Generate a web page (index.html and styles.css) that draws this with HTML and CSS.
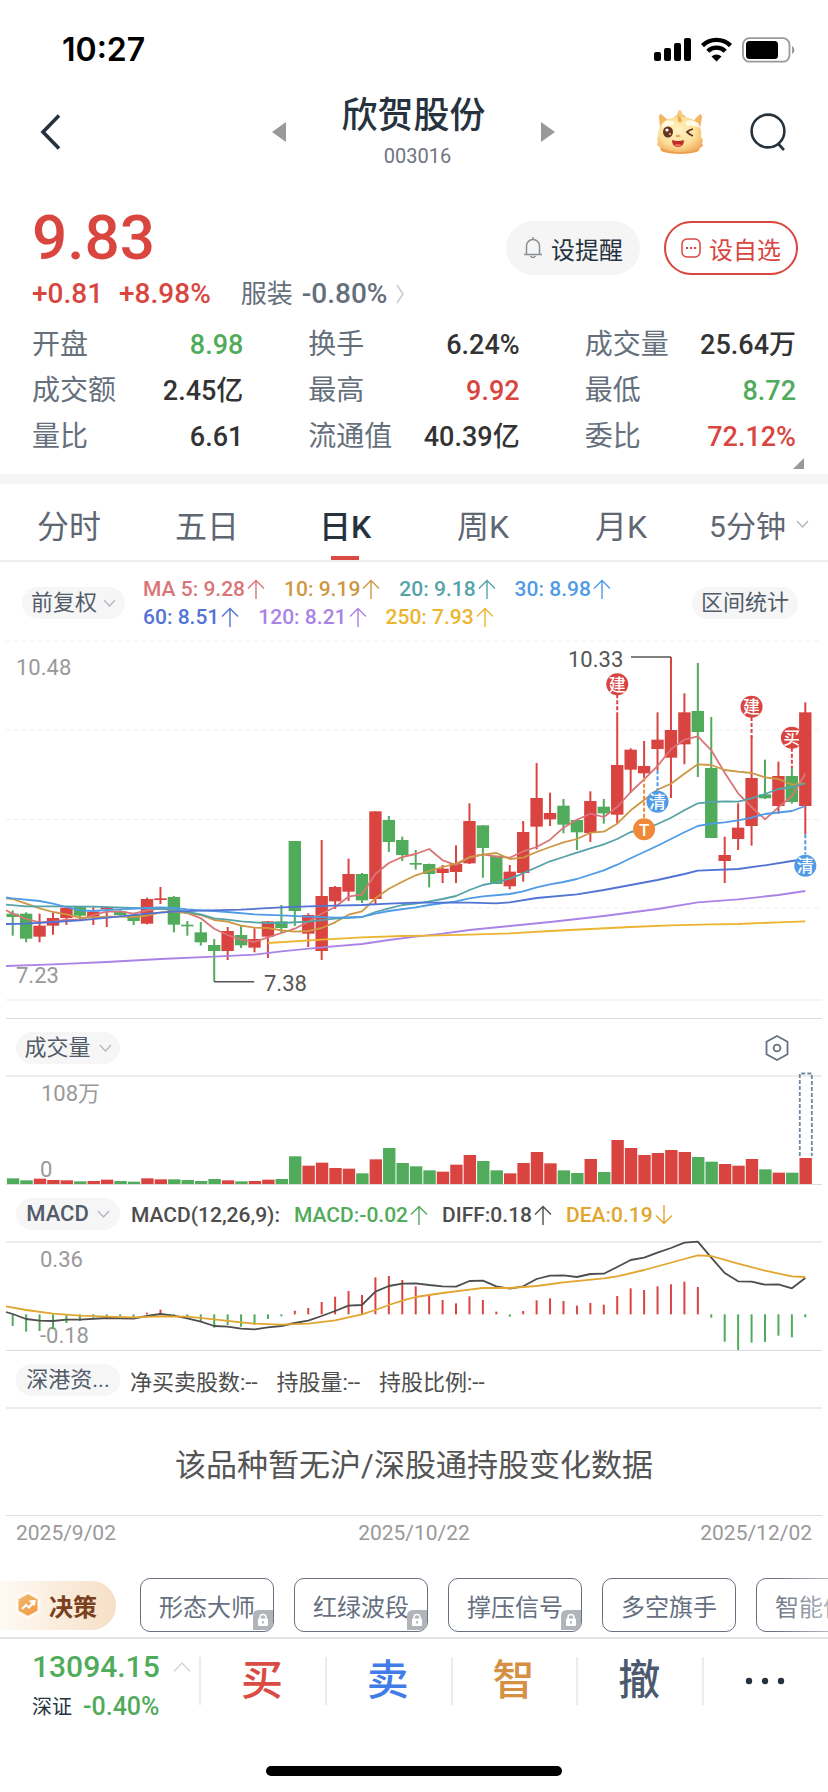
FILE: index.html
```html
<!DOCTYPE html>
<html lang="zh-CN">
<head>
<meta charset="utf-8">
<meta name="viewport" content="width=device-width, initial-scale=1">
<title>欣贺股份 003016</title>
<link rel="stylesheet" href="styles.css">
</head>
<body>
<div class="app">
  <div class="status">
    <span class="clock">10:27</span>
    <svg class="status-icons" width="142" height="26" viewBox="0 0 142 26" aria-hidden="true">
      <rect x="0" y="15" width="7" height="9" rx="2"/>
      <rect x="10" y="11" width="7" height="13" rx="2"/>
      <rect x="20" y="6" width="7" height="18" rx="2"/>
      <rect x="30" y="1" width="7" height="23" rx="2"/>
      <g fill="none" stroke="#000" stroke-width="4.4">
        <path d="M48.5 8.6a20 20 0 0 1 28 0"/>
        <path d="M53.8 14.2a12.4 12.4 0 0 1 17.4 0"/>
      </g>
      <path d="M62.5 24.4l-5-5a7.2 7.2 0 0 1 10 0z"/>
      <rect x="89" y="1.2" width="46.500" height="23.500" rx="6.500" fill="none" stroke="#999" stroke-width="1.800"/>
      <rect x="92" y="4" width="32" height="18" rx="3.500"/>
      <path d="M138 9a4.500 4.500 0 0 1 0 8z" fill="#999"/>
    </svg>
  </div>

  <header class="header">
    <button class="icon-btn back" aria-label="返回">
      <svg width="24" height="40" viewBox="0 0 24 40"><path d="M20 3.500 4 20l16 16.500" fill="none" stroke="#26333f" stroke-width="3.600"/></svg>
    </button>
    <div class="title-group">
      <button class="icon-btn" aria-label="上一只"><svg width="14" height="20" viewBox="0 0 14 20"><path d="M14 0v20L0 10z" fill="#999"/></svg></button>
      <div class="title-block">
        <h1 class="title">欣贺股份</h1>
        <div class="code">003016</div>
      </div>
      <button class="icon-btn" aria-label="下一只"><svg width="14" height="20" viewBox="0 0 14 20"><path d="M0 0v20l14-10z" fill="#999"/></svg></button>
    </div>
    <div class="header-actions">
      <button class="icon-btn" aria-label="助手">
        <svg width="50" height="46" viewBox="0 0 50 46">
          <defs><radialGradient id="face" cx=".45" cy=".4" r=".65"><stop offset="0" stop-color="#fff3c4"/><stop offset=".6" stop-color="#fce09a"/><stop offset="1" stop-color="#f2a95a"/></radialGradient></defs>
          <path d="M5 19 4 9q0-4 2-4l8 7zM45 19l2-10q0-4-2-4l-8 8z" fill="#f3b566"/>
          <path d="M18 10q1-3 4-4 1-5 3-5 2 1 2 4 5 2 5 6z" fill="#f6c877"/>
          <path d="M5 18Q9 8 25 8t20 10q2 5 1 10l2 3-1 3 1 3-3 2-2 3-5 0q-6 2-13 2-9 0-14-2l-5 0-1-4-3-2 1-3-1-3 1-2Q3 22 5 18z" fill="url(#face)"/>
          <path d="M5 39q20 8 40 1l-3 3q-17 4-34 0z" fill="#ef9d4d"/>
          <path d="M24 7q3 2 3 5l-2 2-2-2q-1-3 1-5z" fill="#e9aa50"/>
          <path d="M7 16q3-6 11-4 3 2 1 4-7 0-12 3zM31 12q7-2 12 2l2 5q-6-3-12-2-4-2-2-5z" fill="#fffbe5"/>
          <ellipse cx="13" cy="23" rx="5" ry="5.600" fill="#643322"/><circle cx="12" cy="21" r="1.600" fill="#fff"/><circle cx="15" cy="25" r="1.200" fill="#d89a68"/>
          <path d="M38 20q-4 1-6 3 3 3 6 4" fill="none" stroke="#643322" stroke-width="1.800"/>
          <ellipse cx="23" cy="27" rx="2.500" ry="1.300" fill="#f2a760"/>
          <path d="M17 31q6 2 12 0 0 7-6 7t-6-7z" fill="#bf2b2b"/><path d="M19 36q4-2 8 0-4 3-8 0z" fill="#ef6b5c"/>
        </svg>
      </button>
      <button class="icon-btn" aria-label="搜索">
        <svg width="38" height="40" viewBox="0 0 38 40"><g fill="none" stroke="#26333f" stroke-width="2.600"><circle cx="18" cy="19" r="16.400"/><path d="m27.500 31 6.500 7"/></g></svg>
      </button>
    </div>
  </header>

  <section class="quote">
    <div class="quote-top">
      <div class="quote-main">
        <div class="price">9.83</div>
        <div class="change">
          <span class="up">+0.81</span><span class="up">+8.98%</span>
          <a class="sector" href="#sector"><span class="sector-name">服装</span><span>-0.80%</span><svg width="9" height="20" viewBox="0 0 9 20"><path d="M1 1l6 9-6 9" fill="none" stroke="#c8ccd0" stroke-width="1.500"/></svg></a>
        </div>
      </div>
      <div class="quote-buttons">
        <button class="pill-btn">
          <svg width="20" height="22" viewBox="0 0 20 22"><g fill="none" stroke="#8a8f96" stroke-width="1.500"><path d="M1 17.500h18M3.500 17V9a6.500 6.500 0 0 1 13 0v8M7.500 19q2.500 3 5 0M10 0v2"/></g></svg>
          <span>设提醒</span>
        </button>
        <button class="pill-btn pill-red">
          <svg width="20" height="20" viewBox="0 0 20 20"><rect x="1" y="1" width="18" height="18" rx="5" fill="none" stroke="#d9463f" stroke-width="1.500"/><path d="M5 10h2.200M9 10h2.200M13 10h2.200" stroke="#d9463f" stroke-width="2"/></svg>
          <span>设自选</span>
        </button>
      </div>
    </div>
    <dl class="stats">
      <div class="stat"><dt>开盘</dt><dd class="down">8.98</dd></div>
      <div class="stat"><dt>换手</dt><dd>6.24%</dd></div>
      <div class="stat"><dt>成交量</dt><dd>25.64万</dd></div>
      <div class="stat"><dt>成交额</dt><dd>2.45亿</dd></div>
      <div class="stat"><dt>最高</dt><dd class="up">9.92</dd></div>
      <div class="stat"><dt>最低</dt><dd class="down">8.72</dd></div>
      <div class="stat"><dt>量比</dt><dd>6.61</dd></div>
      <div class="stat"><dt>流通值</dt><dd>40.39亿</dd></div>
      <div class="stat"><dt>委比</dt><dd class="up">72.12%</dd></div>
    </dl>
    <svg class="corner" width="11" height="11" viewBox="0 0 11 11" aria-hidden="true"><path d="M11 0v11H0z" fill="#999"/></svg>
  </section>

  <nav class="tabs">
    <button class="tab">分时</button>
    <button class="tab">五日</button>
    <button class="tab active">日K</button>
    <button class="tab">周K</button>
    <button class="tab">月K</button>
    <button class="tab tab-more">5分钟<svg width="13" height="8" viewBox="0 0 13 8"><path d="M1 1l5.500 6L12 1" fill="none" stroke="#b4bac0" stroke-width="1.500"/></svg></button>
  </nav>

  <svg class="defs" width="0" height="0" aria-hidden="true">
    <symbol id="up" viewBox="0 0 18 20"><path d="M9 20V1.500M1 9.500l8-8 8 8" fill="none" stroke="currentColor" stroke-width="1.400"/></symbol>
    <symbol id="down" viewBox="0 0 18 20"><path d="M9 0v18.500M1 10.500l8 8 8-8" fill="none" stroke="currentColor" stroke-width="1.400"/></symbol>
    <symbol id="chev" viewBox="0 0 13 8"><path d="M1 1l5.500 6L12 1" fill="none" stroke="#b4bcc6" stroke-width="1.500"/></symbol>
    <symbol id="lock" viewBox="0 0 20 20"><path d="M6 0h14v13q0 7-7 7H0V6q0-6 6-6z" fill="#b1b4b8"/><path d="M7 9V7.500a3 3 0 0 1 6 0V9" fill="none" stroke="#fff" stroke-width="1.500"/><rect x="5" y="8.500" width="10" height="7.500" rx="1" fill="#fff"/><path d="M10 11v2.500" stroke="#999" stroke-width="1.300"/></symbol>
  </svg>

  <div class="ma-row">
    <button class="chip-btn">前复权<svg width="13" height="8"><use href="#chev"/></svg></button>
    <div class="ma-list">
      <span class="ma c5">MA 5: 9.28<svg class="arrow"><use href="#up"/></svg></span>
      <span class="ma c10">10: 9.19<svg class="arrow"><use href="#up"/></svg></span>
      <span class="ma c20">20: 9.18<svg class="arrow"><use href="#up"/></svg></span>
      <span class="ma c30">30: 8.98<svg class="arrow"><use href="#up"/></svg></span>
      <span class="ma c60">60: 8.51<svg class="arrow"><use href="#up"/></svg></span>
      <span class="ma c120">120: 8.21<svg class="arrow"><use href="#up"/></svg></span>
      <span class="ma c250">250: 7.93<svg class="arrow"><use href="#up"/></svg></span>
    </div>
    <button class="chip-btn">区间统计</button>
  </div>

  <svg class="chart" id="kline" viewBox="0 0 828 388" role="img" aria-label="日K线"></svg>

  <div class="panel-row">
    <button class="chip-btn wide gap">成交量<svg width="13" height="8"><use href="#chev"/></svg></button>
    <button class="icon-btn settings" aria-label="指标设置"><svg width="26" height="28" viewBox="0 0 26 28"><g fill="none" stroke="#667080" stroke-width="1.800"><path d="M13 2 23.500 7.800v12.400L13 26 2.500 20.200V7.800z"/><circle cx="13" cy="14" r="3.400"/></g></svg></button>
  </div>
  <svg class="chart" id="volume" viewBox="0 0 828 108" role="img" aria-label="成交量"></svg>

  <div class="panel-row">
    <button class="chip-btn wide gap latin">MACD<svg width="13" height="8"><use href="#chev"/></svg></button>
    <div class="legend">
      <span>MACD(12,26,9):</span>
      <span class="ma down">MACD:-0.02<svg class="arrow"><use href="#up"/></svg></span>
      <span class="ma">DIFF:0.18<svg class="arrow"><use href="#up"/></svg></span>
      <span class="ma dea">DEA:0.19<svg class="arrow"><use href="#down"/></svg></span>
    </div>
  </div>
  <svg class="chart" id="macd" viewBox="0 0 828 108" role="img" aria-label="MACD"></svg>

  <div class="panel-row">
    <button class="chip-btn wide">深港资...</button>
    <div class="legend legend-cn"><span>净买卖股数:--</span><span>持股量:--</span><span>持股比例:--</span></div>
  </div>
  <p class="message">该品种暂无沪/深股通持股变化数据</p>
  <div class="dates"><span>2025/9/02</span><span>2025/10/22</span><span>2025/12/02</span></div>

  <div class="tools">
    <button class="decision">
      <svg width="28" height="30" viewBox="0 0 28 30"><defs><linearGradient id="hex" x2=".6" y2="1"><stop offset="0" stop-color="#f0bd72"/><stop offset="1" stop-color="#f29a45"/></linearGradient></defs><path d="M14 2.500 25 8.500v13L14 27.500 3 21.500v-13z" fill="url(#hex)" stroke="#fffaf2" stroke-width="3" stroke-linejoin="round"/><path d="m8 19 4-4 3 2.500 5-6M15.500 11.500l5-.5-.5 4.500" fill="none" stroke="#fff" stroke-width="2.200"/></svg>
      <span>决策</span>
    </button>
    <button class="tool">形态大师<svg class="lock"><use href="#lock"/></svg></button>
    <button class="tool">红绿波段<svg class="lock"><use href="#lock"/></svg></button>
    <button class="tool">撑压信号<svg class="lock"><use href="#lock"/></svg></button>
    <button class="tool">多空旗手</button>
    <button class="tool">智能信号</button>
  </div>

  <footer class="bottom">
    <button class="index">
      <span class="index-main"><span class="index-value">13094.15</span><svg width="18" height="10" viewBox="0 0 18 10"><path d="M1 9.500 9 1l8 8.500" fill="none" stroke="#d4d7da" stroke-width="1.500"/></svg></span>
      <span class="index-sub"><span class="index-name">深证</span><span>-0.40%</span></span>
    </button>
    <button class="trade buy">买</button>
    <button class="trade sell">卖</button>
    <button class="trade smart">智</button>
    <button class="trade cancel">撤</button>
    <button class="trade" aria-label="更多"><svg width="40" height="8" viewBox="0 0 40 8"><circle cx="4" cy="4" r="3.200" fill="#26333f"/><circle cx="20" cy="4" r="3.200" fill="#26333f"/><circle cx="36" cy="4" r="3.200" fill="#26333f"/></svg></button>
  </footer>
  <div class="home-bar"></div>
</div>
<script src="charts.js"></script>
</body>
</html>
```
FILE: styles.css
```css
* { box-sizing: border-box; }
body {
  margin: 0;
  background: #fff;
  color: #333;
  font-family: Roboto, "Noto Sans CJK SC", sans-serif;
  font-size: 22px;
}
button { margin: 0; padding: 0; border: 0; background: none; font: inherit; color: inherit; }
svg { display: block; flex: none; }
.app { min-height: 100vh; display: flex; flex-direction: column; overflow: hidden; }
.up { color: #d9463f; }
.down { color: #50ab5b; }
.defs { position: absolute; }

.status { height: 88px; padding: 12px 32px 0 62px; display: flex; align-items: center; justify-content: space-between; }
.clock { font: 600 32px/36px Inter, sans-serif; color: #000; }

.header { height: 88px; padding: 0 40px 0 39px; display: grid; grid-template-columns: 1fr auto 1fr; align-items: center; }
.icon-btn { display: block; }
.back { justify-self: start; }
.title-group { display: flex; align-items: center; gap: 55px; }
.title-block { text-align: center; padding-bottom: 2px; }
.title { margin: 0 0 6px; font-size: 36px; line-height: 44px; font-weight: 500; color: #26333f; }
.code { padding-left: 8px; font-size: 20px; line-height: 24px; color: #6f7480; }
.header-actions { display: flex; align-items: center; justify-content: flex-end; gap: 45px; }

.quote { position: relative; padding: 32px 30px 0 32px; border-bottom: 10px solid #f5f5f5; }
.quote-top { display: flex; justify-content: space-between; align-items: flex-start; }
.price { font-size: 62px; line-height: 60px; font-weight: 500; color: #d9463f; }
.change { display: flex; align-items: center; gap: 16px; margin-top: 8px; font-size: 28px; line-height: 36px; font-weight: 500; }
.sector { display: flex; align-items: center; gap: 9px; margin-left: 14px; color: #666f7c; text-decoration: none; }
.sector-name { font-size: 26px; font-weight: 400; }
.quote-buttons { display: flex; gap: 24px; margin-top: 13px; }
.pill-btn { height: 54px; min-width: 134px; border-radius: 27px; background: #f5f5f5; color: #26333f; font-size: 24px; display: flex; align-items: center; justify-content: center; gap: 8px; }
.pill-red { background: #fff; border: 2px solid #d9463f; color: #d9463f; }
.stats { margin: 10px 2px 0 0; padding-bottom: 14px; display: grid; grid-template-columns: repeat(3, 1fr); column-gap: 65px; }
.stat { display: flex; justify-content: space-between; line-height: 46px; white-space: nowrap; }
.stat dt { font-size: 28px; color: #666f7c; }
.stat dd { margin: 0; font-size: 27px; font-weight: 500; }
.corner { position: absolute; right: 24px; bottom: 5px; }

.tabs { display: grid; grid-template-columns: repeat(6, 1fr); height: 78px; border-bottom: 2px solid #ededed; }
.tab { position: relative; padding-top: 3px; font-size: 32px; color: #5f6773; }
.tab.active { color: #26333f; font-weight: 500; }
.tab.active::after { content: ""; position: absolute; left: 50%; bottom: 0; width: 28px; height: 4px; margin-left: -14px; background: #d94b43; }
.tab-more { display: flex; align-items: center; justify-content: center; gap: 10px; font-size: 30px; }

.ma-row { display: flex; align-items: center; min-height: 68px; padding: 13px 30px 0 22px; }
.chip-btn { height: 32px; padding: 0 9px; border-radius: 16px; background: #f6f6f7; color: #525c69; line-height: 32px; display: flex; align-items: center; justify-content: center; gap: 6px; white-space: nowrap; }
.wide { width: 104px; padding: 0; }
.gap { gap: 8px; }
.latin { font-weight: 500; }
.ma-list { flex: 1; display: flex; flex-wrap: wrap; column-gap: 19px; margin-left: 18px; padding-right: 60px; font-size: 21px; line-height: 28px; font-weight: 500; }
.ma { display: flex; align-items: center; gap: 2px; white-space: nowrap; }
.arrow { width: 18px; height: 20px; }
.c5 { color: #d97578; }
.c10 { color: #cd9743; }
.c20 { color: #55a3a8; }
.c30 { color: #4f9be6; }
.c60 { color: #5273d6; }
.c120 { color: #aa83e6; }
.c250 { color: #ebb52f; }
.dea { color: #e2a52e; }

.chart { width: 100%; height: auto; overflow: visible; font-size: 22px; }
.axis { fill: #999; }
.extreme { fill: #555; }
.marker { fill: #fff; font-size: 17px; font-weight: 500; text-anchor: middle; }

.panel-row { height: 58px; margin: 0 6px; padding: 2px 32px 0 10px; border-bottom: 2px solid #ededed; display: flex; align-items: center; }
.settings { margin-left: auto; }
.legend { display: flex; gap: 14px; margin-left: 11px; padding-top: 2px; font-size: 21px; color: #4d4d4d; font-weight: 500; white-space: nowrap; }
.legend .down { color: #50ab5b; }
.legend .dea { color: #e2a52e; }
.legend-cn { margin-left: 10px; padding-top: 0; gap: 19px; font-size: 22px; font-weight: 400; }
.message { margin: 0 6px; padding-top: 8px; border-bottom: 1px solid #ddd; font-size: 31px; line-height: 98px; text-align: center; color: #555; }
.dates { display: grid; grid-template-columns: 1fr auto 1fr; padding: 0 16px; font-size: 21px; line-height: 34px; color: #999; }
.dates span:last-child { text-align: right; }

.tools { position: relative; display: flex; align-items: center; gap: 20px; padding: 28px 0 5px; border-bottom: 2px solid #e5e5e5; overflow: hidden; }
.tools::after { content: ""; position: absolute; right: 0; top: 0; bottom: 0; width: 56px; background: linear-gradient(90deg, rgba(255, 255, 255, 0), rgba(255, 255, 255, .5)); }
.decision { flex: none; width: 116px; height: 49px; margin-right: 4px; padding-left: 14px; border-radius: 0 25px 25px 0; background: linear-gradient(90deg, #fefaf5, #f6dfc5); display: flex; align-items: center; gap: 7px; font-size: 24px; font-weight: 700; color: #7a4020; }
.tool { position: relative; flex: none; width: 134px; height: 54px; border: 1px solid #667080; border-radius: 10px; font-size: 24px; color: #667080; }
.lock { position: absolute; right: 0; bottom: 1px; width: 20px; height: 20px; }

.bottom { display: grid; grid-template-columns: 199px repeat(5, 1fr); height: 96px; }
.index { padding: 12px 8px 0 32px; display: flex; flex-direction: column; gap: 10px; color: #50ab5b; font-weight: 500; }
.index-main { display: flex; align-items: center; justify-content: space-between; align-self: stretch; font-size: 30px; line-height: 32px; }
.index-sub { display: flex; align-items: center; gap: 11px; font-size: 25px; line-height: 28px; }
.index-name { font-size: 20px; font-weight: 400; color: #26333f; }
.trade { margin: 18px 0 30px; padding-right: 2px; border-left: 2px solid #ececec; font-size: 42px; line-height: 48px; font-weight: 500; display: flex; align-items: center; justify-content: center; }
.buy { color: #d94b43; }
.sell { color: #417de8; }
.smart { color: #d59043; }
.cancel { color: #4c5a70; }
.home-bar { width: 296px; height: 10px; margin: auto auto 16px; border-radius: 5px; background: #000; }
```
FILE: charts.js
```js
const NS = "http://www.w3.org/2000/svg";
const RED = "#d94441", GREEN = "#50ab5b";
const STEP = 13.434, START = 12.7;
const cx = i => START + STEP * i;

function add(parent, tag, attrs, text) {
  const el = document.createElementNS(NS, tag);
  for (const k in attrs) el.setAttribute(k, attrs[k]);
  if (text) el.textContent = text;
  parent.appendChild(el);
  return el;
}
function hline(svg, y, stroke, dash, width) {
  add(svg, "line", { x1: 6, x2: 822, y1: y, y2: y, stroke, "stroke-dasharray": dash || "none", "stroke-width": width || 1 });
}
// Series text is "index:level index:level ..."; levels are thirds of a unit.
function curve(svg, text, stroke, base) {
  const pts = text.trim().split(/\s+/).map(p => {
    const [i, y] = p.split(":").map(Number);
    return cx(i).toFixed(1) + "," + ((y - base) / 3).toFixed(1);
  });
  add(svg, "polyline", { points: pts.join(" "), fill: "none", stroke, "stroke-width": 1.8, "stroke-linejoin": "round" });
}
// Consecutive levels, one per candle, preceded by the left edge.
function dense(svg, text, stroke, base) {
  const v = text.trim().split(/\s+/);
  curve(svg, v.map((y, k) => (k ? k - 1 : -0.5) + ":" + y).join(" "), stroke, base);
}

// direction, high, body top, body bottom, low
const candles = `g 838 848 858 914|g 844 848 923 934|r 848 884 917 934|r 844 861 884 911|r 826 830 861 882|g 826 828 854 866|r 828 842 857 882|r 826 829 834 888|g 838 841 852 854|g 850 852 870 882
r 800 804 878 880|r 768 802 807 819|g 795 798 881 904|g 870 881 886 914|g 873 904 934 944|g 924 942 960 1052|r 888 900 960 987|g 884 912 943 951|r 892 924 950 964|r 870 871 917 981
g 822 871 891 906|g 630 630 840 885|r 847 852 908 948|r 627 795 960 987|r 765 768 811 834|r 683 729 782 810|g 726 729 808 816|r 541 541 804 820|g 555 567 633 663|g 617 627 672 690
g 657 696 701 716|g 698 699 729 769|r 702 713 726 756|r 643 699 723 756|r 517 570 697 699|g 583 583 651 740|g 674 674 759 759|r 702 722 766 775|r 570 603 726 752|r 396 501 587 655
r 485 546 565 585|g 504 524 581 607|g 567 567 604 657|r 481 510 606 633|g 504 527 547 578|r 252 402 551 578|r 352 356 416 485|r 330 405 427 440|r 244 326 354 418|r 78 297 380 501
r 187 244 340 400|g 96 240 303 438|g 258 411 621 621|r 617 672 690 756|r 517 590 624 657|r 315 441 585 644|g 386 490 502 504|r 392 435 525 548|g 411 435 513 518|r 214 244 525 610`
  .split(/[|\n]/).map(s => s.trim().split(" ")).map(a => [a[0] === "r" ? RED : GREEN, ...a.slice(1).map(Number)]);

const k = document.getElementById("kline");
[10, 99, 188.5, 277].forEach(y => hline(k, y, "#f0f0f0", "5 3"));
hline(k, 369, "#f2f2f2", "", 1.5);
hline(k, 387.5, "#dcdcdc");

// candle index, marker level, dash start, dash end, fill, glyph
[[45, 160, 190, 252, RED, "建"], [55, 227, 258, 320, RED, "建"], [58, 320, 350, 411, RED, "买"]].forEach(marker);
candles.forEach(([c, hi, top, bottom, lo], i) => {
  add(k, "line", { x1: cx(i), x2: cx(i), y1: hi / 3, y2: lo / 3, stroke: c, "stroke-width": 2 });
  add(k, "rect", { x: cx(i) - 6.2, y: top / 3, width: 12.4, height: Math.max((bottom - top) / 3, 1.6), fill: c });
});
dense(k, "838 848 864 874 872 866 866 852 842 841 848 838 832 838 846 862 893 912 926 933 919 906 893 872 848 828 797 790 729 696 678 669 654 688 702 680 670 677 680 661 648 626 590 566 548 558 528 483 445 405 355 326 316 358 425 487 528 565 529 496 428", "#d97578", 0);
dense(k, "802 804 818 832 843 850 860 860 857 857 858 854 844 842 846 852 867 872 884 890 891 898 902 900 891 874 851 841 802 773 752 733 720 708 698 678 671 666 684 680 663 648 634 624 605 602 578 538 507 476 458 428 400 402 417 422 426 439 444 461 457", "#cd9743", 0);
curve(k, "-0.5:821 1:826 3:826 6:827 10:832 12:836 13:843 14:850 15:862 16:866 17:871 18:874 19:876 20:876 22:872 24:863 26:858 27:843 28:832 29:822 30:818 31:811 32:804 33:795 34:777 35:762 36:754 37:743 38:727 39:709 40:691 41:678 42:665 43:652 44:640 45:624 46:603 47:596 48:579 49:560 50:538 51:517 52:513 53:511 54:512 55:502 56:489 57:474 58:468 59:457", "#55a3a8", 0);
curve(k, "-0.5:799 0:802 2:810 3:818 4:828 5:838 6:840 7:837 8:835 10:831 11:829 12:831 13:835 14:838 15:840 16:843 18:850 20:853 22:857 24:860 26:858 27:848 28:840 30:829 31:822 33:811 34:802 35:796 37:789 38:781 39:769 40:760 41:753 42:744 44:718 45:701 46:682 48:644 50:604 51:585 52:578 53:574 54:568 55:560 56:549 58:540 59:525", "#4f9be6", 0);
curve(k, "-0.5:879 1:878 3:873 5:868 8:856 10:848 12:842 14:839 17:836 20:829 22:826 24:824 26:822 28:818 30:815 32:815 34:815 36:817 37:814 39:801 42:790 44:777 46:762 48:747 50:729 51:719 54:714 56:703 58:690 59:684", "#5273d6", 0);
curve(k, "-0.5:1005 3:1000 7:993 11:984 15:977 18:971 20:961 23:949 26:939 28:927 30:917 32:908 34:897 37:885 40:873 44:855 48:834 51:814 54:805 57:792 59:780", "#aa83e6", 0);
curve(k, "19:936 23:926 26:919 29:915 31:914 34:911 37:907 40:900 43:894 46:888 49:883 52:880 54:879 57:874 59:871", "#ebb52f", 0);
[[48, 512, 418, 478, "#4f9be6", "清"], [47, 595, 440, 562, "#f08a38", "T"], [59, 704, 610, 670, "#4f9be6", "清"]].forEach(marker);

function marker([i, y, from, to, fill, glyph]) {
  add(k, "line", { x1: cx(i), x2: cx(i), y1: from / 3, y2: to / 3, stroke: fill, "stroke-width": 2, "stroke-dasharray": "4 2" });
  add(k, "circle", { cx: cx(i), cy: y / 3, r: 11, fill });
  add(k, "text", { class: "marker", x: cx(i), y: y / 3 + 6.5 }, glyph);
}
add(k, "path", { d: `M${cx(15)} 350.7h40M${cx(49)} 26h-40`, fill: "none", stroke: "#555", "stroke-width": 1.5 });
add(k, "text", { class: "axis", x: 16, y: 44 }, "10.48");
add(k, "text", { class: "axis", x: 16, y: 352 }, "7.23");
add(k, "text", { class: "extreme", x: 264, y: 360 }, "7.38");
add(k, "text", { class: "extreme", x: 568, y: 36 }, "10.33");

const v = document.getElementById("volume");
const heights = "17 11 16 12 11 8 9 13 9 7 17 14 14 12 9 15 11 8 9 13 15 83 55 64 48 46 32 74 108 63 53 41 37 58 87 69 41 32 63 96 62 41 33 75 36 132 108 87 93 102 96 81 67 60 55 75 44 34 34 78".split(" ").map(Number);
hline(v, 107.5, "#dcdcdc");
add(v, "text", { class: "axis", x: 41, y: 24 }, "108万");
add(v, "text", { class: "axis", x: 40, y: 100 }, "0");
heights.forEach((h, i) => add(v, "rect", { x: cx(i) - 5.8, y: 107 - h / 3, width: 12.4, height: h / 3, fill: candles[i][0] }));
add(v, "path", { d: `M${cx(59) - 5.5} 79V-3.500h12V79`, fill: "none", stroke: "#7187a3", "stroke-width": 1.8, "stroke-dasharray": "4 2" });

const m = document.getElementById("macd");
hline(m, 107.5, "#dcdcdc");
add(m, "text", { class: "axis", x: 40, y: 24 }, "0.36");
add(m, "text", { class: "axis", x: 40, y: 100 }, "-0.18");
"945 962 960 955 936 930 920 915 915 920 905 896 917 919 932 950 942 947 941 924 916 899 891 873 857 840 852 799 795 807 826 852 867 877 856 867 902 917 900 868 862 870 884 876 881 855 832 837 826 820 812 828 920 992 1017 995 993 974 979 919".split(" ").map(Number).forEach((y, i) =>
  add(m, "line", { x1: cx(i), x2: cx(i), y1: (910 - 696) / 3, y2: (y - 696) / 3, stroke: y < 910 ? RED : GREEN, "stroke-width": 2 }));
curve(m, "-0.5:903 0:909 1:924 2:929 3:930 4:926 5:926 7:921 9:923 10:915 11:909 12:914 13:922 14:932 15:945 16:947 17:953 18:955 19:949 20:945 21:936 22:929 23:915 24:900 25:884 26:882 27:842 28:825 29:818 30:817 31:822 32:826 33:827 34:810 35:809 36:826 37:833 38:826 39:804 40:794 41:793 42:798 43:789 44:788 45:768 46:747 47:740 48:725 49:711 50:695 51:692 52:740 53:786 54:811 55:812 56:821 57:820 58:832 59:801", "#4d4d4d", 696);
curve(m, "-0.5:886 1:897 3:908 5:914 7:917 9:919 11:916 13:917 15:925 17:934 18:938 20:941 22:938 24:928 26:910 27:897 28:882 29:869 30:858 32:846 34:836 35:831 37:831 39:825 41:814 44:802 45:796 47:777 50:744 51:733 52:735 54:758 56:779 58:796 59:798", "#e2a52e", 696);
```
